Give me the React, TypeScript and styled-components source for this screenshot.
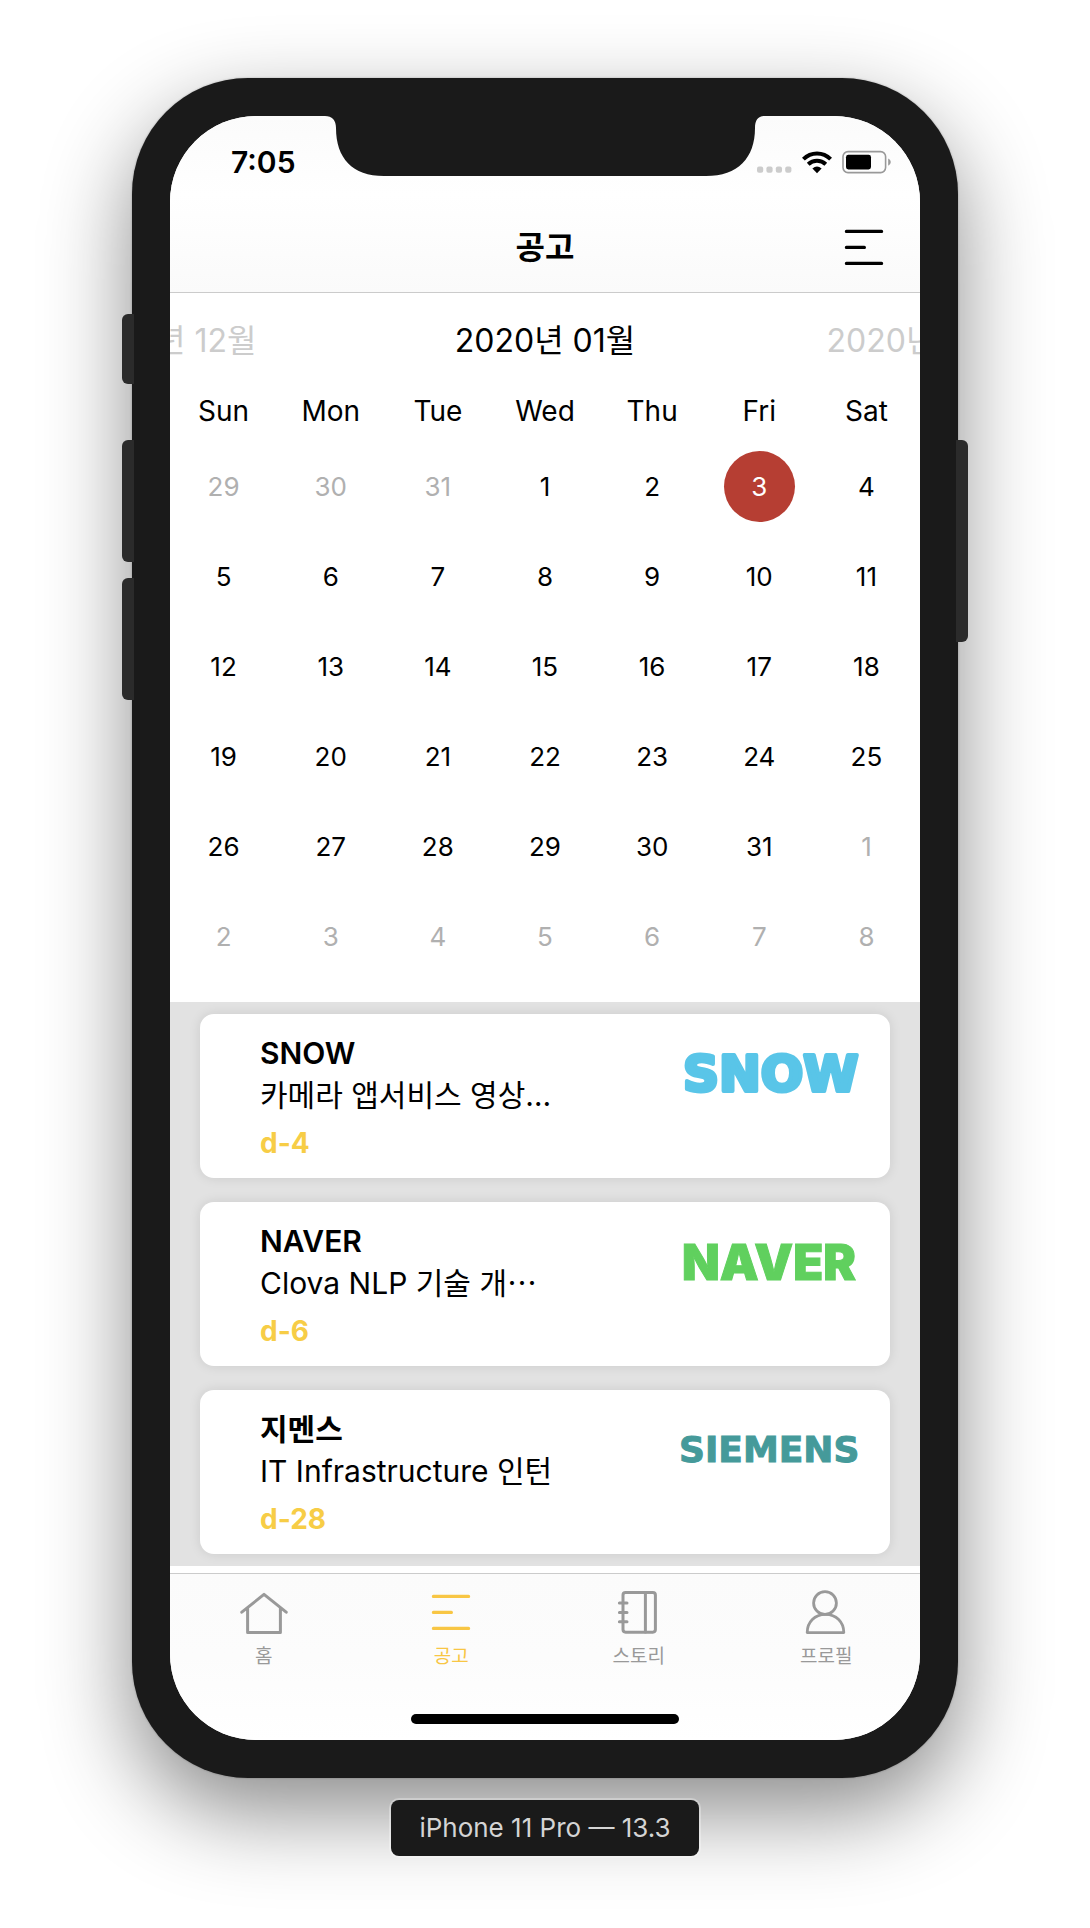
import React from "react";
import styled, { createGlobalStyle } from "styled-components";

const latin = `Inter, "Noto Sans CJK KR", sans-serif`;

const GlobalStyle = createGlobalStyle`
  *, *::before, *::after { box-sizing: border-box; }
  body {
    margin: 0;
    background: #ffffff;
    color: #000000;
    font-family: ${latin};
  }
  button {
    margin: 0;
    padding: 0;
    border: 0;
    background: none;
    color: inherit;
    font: inherit;
    cursor: pointer;
  }
`;

const Page = styled.div`
  display: flex;
  flex-direction: column;
  align-items: center;
  gap: 22px;
  padding: 78px 24px 72px;
  overflow: hidden;
`;

const Phone = styled.div`
  position: relative;
  width: 100%;
  max-width: 826px;
  padding: 38px;
  border-radius: 116px;
  background: #1a1a1a;
  box-shadow: 0 0 2px rgba(0, 0, 0, 0.3), 0 34px 88px rgba(0, 0, 0, 0.46);
`;

const SideButton = styled.span<{ $side: "left" | "right"; $top: number; $length: number }>`
  position: absolute;
  top: ${(p) => p.$top}px;
  ${(p) => p.$side}: -10px;
  width: 12px;
  height: ${(p) => p.$length}px;
  border-radius: ${(p) => (p.$side === "left" ? "6px 0 0 6px" : "0 6px 6px 0")};
  background: #2b2b2b;
`;

const Screen = styled.main`
  position: relative;
  display: flex;
  flex-direction: column;
  overflow: hidden;
  border-radius: 86px;
  background: #ffffff;
`;

const Notch = styled.svg`
  position: absolute;
  top: 0;
  left: 50%;
  width: 440px;
  height: 60px;
  transform: translateX(-50%);
`;

const Header = styled.header`
  border-bottom: 1px solid #cbcbcb;
  background: linear-gradient(#fbfbfb, #ffffff 45%, #fafafa);
`;

const StatusBar = styled.div`
  display: flex;
  align-items: center;
  justify-content: space-between;
  height: 88px;
  padding: 4px 28px 0 61px;
`;

const Clock = styled.time`
  font-size: 30px;
  font-weight: 600;
  line-height: 36px;
`;

const Indicators = styled.div`
  display: flex;
  align-items: center;
  gap: 10px;
`;

const NavBar = styled.div`
  display: grid;
  grid-template-columns: 1fr auto 1fr;
  align-items: center;
  height: 88px;
  padding: 0 32px;
`;

const NavTitle = styled.h1`
  grid-column: 2;
  margin: 0;
  font-size: 32px;
  font-weight: 600;
  line-height: 42px;
`;

const MenuButton = styled.button`
  justify-self: end;
  display: flex;
`;

const Months = styled.nav`
  display: flex;
  justify-content: center;
  height: 87px;
  padding-top: 8px;
  overflow: hidden;
`;

const Month = styled.button<{ $current?: boolean }>`
  flex: 0 0 50%;
  color: ${(p) => (p.$current ? "#000000" : "#cccccc")};
  font-size: 32px;
  line-height: 42px;
  white-space: nowrap;
`;

const Calendar = styled.table`
  width: 100%;
  margin-bottom: 21px;
  border-collapse: collapse;
  table-layout: fixed;
`;

const Weekday = styled.th`
  height: 61px;
  padding: 0;
  font-size: 28px;
  font-weight: 400;
`;

const DayCell = styled.td`
  height: 90px;
  padding: 0;
  text-align: center;
`;

const Day = styled.button<{ $muted: boolean; $selected: boolean }>`
  width: 71px;
  height: 71px;
  border-radius: 50%;
  background: ${(p) => (p.$selected ? "#b63e33" : "transparent")};
  color: ${(p) => (p.$selected ? "#ffffff" : p.$muted ? "#b0b0b0" : "#000000")};
  font-size: 26px;
  vertical-align: middle;
`;

const Notices = styled.ul`
  display: flex;
  flex-direction: column;
  gap: 24px;
  margin: 0 0 7px;
  padding: 12px 30px;
  background: #e2e2e2;
  list-style: none;
`;

const Card = styled.li`
  display: flex;
  align-items: flex-start;
  justify-content: space-between;
  padding: 18px 24px 14px 60px;
  border-radius: 14px;
  background: #ffffff;
  box-shadow: 0 0 12px rgba(0, 0, 0, 0.1);
`;

const Company = styled.h2`
  margin: 0;
  font-size: 30px;
  font-weight: 600;
  line-height: 42px;
`;

const Summary = styled.p`
  margin: 0 0 6px;
  font-size: 30px;
  line-height: 42px;
  white-space: nowrap;
`;

const WideEllipsis = styled.span`
  font-family: "Noto Sans CJK KR", sans-serif;
  line-height: 1;
`;

const DaysLeft = styled.p`
  margin: 0;
  color: #f7cd46;
  font-size: 28px;
  font-weight: 700;
  line-height: 42px;
`;

const Logo = styled.svg`
  flex: none;
  width: 188px;
  height: 88px;
`;

const TabBar = styled.footer`
  display: flex;
  flex-direction: column;
  align-items: center;
  gap: 45px;
  padding: 15px 0 16px;
  border-top: 1px solid #cbcbcb;
  background: linear-gradient(#fbfbfb, #fcfcfc 50%, #ffffff);
`;

const Tabs = styled.nav`
  display: flex;
  align-self: stretch;
`;

const Tab = styled.button<{ $active: boolean }>`
  display: flex;
  flex: 1;
  flex-direction: column;
  align-items: center;
  gap: 8px;
  color: ${(p) => (p.$active ? "#f8c644" : "#999999")};
  font-size: 19px;
  line-height: 24px;
`;

const HomeIndicator = styled.span`
  width: 268px;
  height: 10px;
  border-radius: 5px;
  background: #000000;
`;

const DeviceLabel = styled.p`
  position: relative;
  margin: 0;
  padding: 0 28px;
  border-radius: 8px;
  background: #1a1a1a;
  box-shadow: 0 0 0 2px rgba(255, 255, 255, 0.3);
  color: #d4d4d4;
  font-size: 26px;
  line-height: 56px;
`;

const weekdays = ["Sun", "Mon", "Tue", "Wed", "Thu", "Fri", "Sat"];

const weeks = Array.from({ length: 6 }, (_, week) =>
  weekdays.map((_, i) => {
    const date = new Date(2019, 11, 29 + week * 7 + i);
    return { day: date.getDate(), month: date.getMonth() };
  })
);

function ListIcon() {
  return (
    <svg width="48" height="48" viewBox="0 0 48 48" fill="none" stroke="currentColor" strokeWidth="3.2" strokeLinecap="round" aria-hidden="true">
      <path d="M6.4 7.4H41.6M6.4 23.4H24.4M6.4 39.4H41.6" />
    </svg>
  );
}

function HomeIcon() {
  return (
    <svg width="48" height="48" viewBox="0 0 48 48" fill="none" stroke="currentColor" strokeWidth="3" strokeLinecap="round" strokeLinejoin="round" aria-hidden="true">
      <path d="M1.8 23.2 24 5.4 46.2 23.2M7.6 19V43.6H40.4V19" />
    </svg>
  );
}

function StoryIcon() {
  return (
    <svg width="48" height="48" viewBox="0 0 48 48" fill="none" stroke="currentColor" strokeWidth="3" strokeLinecap="round" aria-hidden="true">
      <rect x="8" y="3.4" width="32.4" height="39.8" rx="2.6" />
      <path d="M30.4 3.4V43M4.4 14H12M4.4 23.4H12M4.4 32.8H12" />
    </svg>
  );
}

function ProfileIcon() {
  return (
    <svg width="48" height="48" viewBox="0 0 48 48" fill="none" stroke="currentColor" strokeWidth="2.8" strokeLinejoin="round" aria-hidden="true">
      <circle cx="23" cy="14" r="11.4" />
      <path d="M5.2 43.6C5.2 33 12.8 25.4 23.5 25.4S41.8 33 41.8 43.6Z" />
    </svg>
  );
}

function SnowLogo() {
  return (
    <Logo viewBox="0 0 188 88" role="img" aria-label="SNOW">
      <text x="5" y="59" fill="#59c5e8" stroke="#59c5e8" strokeWidth="4" strokeLinejoin="round" fontFamily="'DejaVu Sans', sans-serif" fontWeight="700" fontSize="50">SNOW</text>
    </Logo>
  );
}

function NaverLogo() {
  return (
    <Logo viewBox="0 0 188 88" role="img" aria-label="NAVER">
      <text x="4" y="60" fill="#60d05e" stroke="#60d05e" strokeWidth="1" fontFamily="Inter, sans-serif" fontWeight="900" fontSize="49">NAVER</text>
    </Logo>
  );
}

function SiemensLogo() {
  return (
    <Logo viewBox="0 0 188 88" role="img" aria-label="SIEMENS">
      <text x="1" y="54" fill="#459a9a" stroke="#459a9a" strokeWidth="1" fontFamily="'DejaVu Sans', sans-serif" fontWeight="700" fontSize="36">SIEMENS</text>
    </Logo>
  );
}

const notices = [
  { company: "SNOW", summary: <>카메라 앱서비스 영상…</>, left: "d-4", logo: <SnowLogo /> },
  { company: "NAVER", summary: <>Clova NLP 기술 개<WideEllipsis>⋯</WideEllipsis></>, left: "d-6", logo: <NaverLogo /> },
  { company: "지멘스", summary: <>IT Infrastructure 인턴</>, left: "d-28", logo: <SiemensLogo /> },
];

const tabs = [
  { label: "홈", icon: <HomeIcon /> },
  { label: "공고", icon: <ListIcon /> },
  { label: "스토리", icon: <StoryIcon /> },
  { label: "프로필", icon: <ProfileIcon /> },
];

export default function App() {
  return (
    <>
      <GlobalStyle />
      <Page lang="ko">
        <Phone>
          <SideButton $side="left" $top={236} $length={70} />
          <SideButton $side="left" $top={362} $length={122} />
          <SideButton $side="left" $top={500} $length={122} />
          <SideButton $side="right" $top={362} $length={202} />
          <Screen>
            <Header>
              <StatusBar>
                <Clock>7:05</Clock>
                <Indicators>
                  <svg width="35" height="24" viewBox="0 0 35 24" fill="#cccccc" aria-hidden="true">
                    {[0, 9.4, 18.8, 28.2].map((x) => (
                      <rect key={x} x={x} y="16.5" width="6.2" height="6.2" rx="2" />
                    ))}
                  </svg>
                  <svg width="30" height="24" viewBox="0 0 30 24" aria-label="Wi-Fi" role="img">
                    <g fill="none" stroke="#000" strokeWidth="4">
                      <path d="M1.4 9.2C9 1.6 21 1.6 28.6 9.2" />
                      <path d="M6.2 14.2C11.2 9.6 18.8 9.6 23.8 14.2" />
                    </g>
                    <path d="M15 23.2 10.4 18.6Q15 14.4 19.6 18.6Z" />
                  </svg>
                  <svg width="50" height="24" viewBox="0 0 50 24" aria-label="Battery" role="img">
                    <rect x="1" y="1.6" width="42.6" height="21" rx="5" fill="none" stroke="#999" strokeWidth="1.6" />
                    <rect x="4" y="4.8" width="25" height="14.6" rx="2.4" />
                    <path d="M46.2 8.4Q48.8 9.6 48.8 12.1T46.2 15.8Z" fill="#999" />
                  </svg>
                </Indicators>
              </StatusBar>
              <NavBar>
                <NavTitle>공고</NavTitle>
                <MenuButton type="button" aria-label="목록">
                  <ListIcon />
                </MenuButton>
              </NavBar>
            </Header>

            <Months aria-label="월 선택">
              <Month type="button">2019년 12월</Month>
              <Month type="button" $current>2020년 01월</Month>
              <Month type="button">2020년 02월</Month>
            </Months>
            <Calendar>
              <thead>
                <tr>
                  {weekdays.map((name) => (
                    <Weekday key={name} scope="col">{name}</Weekday>
                  ))}
                </tr>
              </thead>
              <tbody>
                {weeks.map((week, row) => (
                  <tr key={row}>
                    {week.map(({ day, month }) => (
                      <DayCell key={day}>
                        <Day type="button" $muted={month !== 0} $selected={month === 0 && day === 3}>{day}</Day>
                      </DayCell>
                    ))}
                  </tr>
                ))}
              </tbody>
            </Calendar>

            <Notices>
              {notices.map((n) => (
                <Card key={n.company}>
                  <div>
                    <Company>{n.company}</Company>
                    <Summary>{n.summary}</Summary>
                    <DaysLeft>{n.left}</DaysLeft>
                  </div>
                  {n.logo}
                </Card>
              ))}
            </Notices>

            <TabBar>
              <Tabs>
                {tabs.map((tab) => (
                  <Tab key={tab.label} type="button" $active={tab.label === "공고"}>
                    {tab.icon}
                    {tab.label}
                  </Tab>
                ))}
              </Tabs>
              <HomeIndicator />
            </TabBar>

            <Notch viewBox="0 0 440 60" fill="#1a1a1a" aria-hidden="true">
              <path d="M0 0H440C433 0 430 4 430 12C430 42 413 60 381 60H59C27 60 11 42 11 12C11 4 7 0 0 0Z" />
            </Notch>
          </Screen>
        </Phone>
        <DeviceLabel>iPhone 11 Pro — 13.3</DeviceLabel>
      </Page>
    </>
  );
}
